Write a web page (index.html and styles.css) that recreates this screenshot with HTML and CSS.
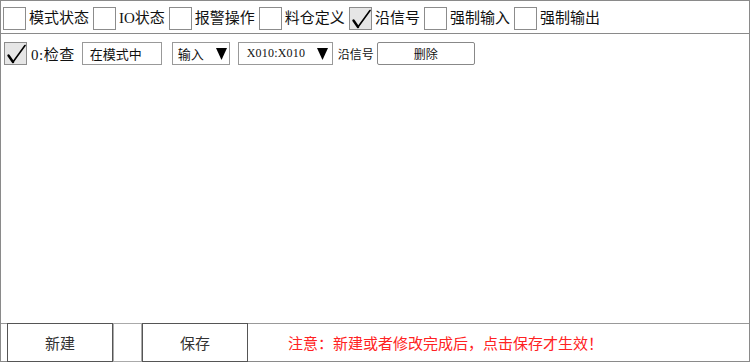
FILE: index.html
```html
<!DOCTYPE html>
<html lang="zh">
<head>
<meta charset="utf-8">
<link rel="stylesheet" href="styles.css">
</head>
<body>
<div class="frame">
  <div class="tabs">
    <div class="opt"><span class="box"></span><span class="lbl">模式状态</span></div>
    <div class="opt"><span class="box"></span><span class="lbl">IO状态</span></div>
    <div class="opt"><span class="box"></span><span class="lbl">报警操作</span></div>
    <div class="opt"><span class="box"></span><span class="lbl">料仓定义</span></div>
    <div class="opt"><span class="box on"><svg class="chk" viewBox="0 0 21 21"><path d="M3.5 12.5 L8 19" class="c1"/><path d="M8 19 L20 2.5" class="c2"/></svg></span><span class="lbl">沿信号</span></div>
    <div class="opt"><span class="box"></span><span class="lbl">强制输入</span></div>
    <div class="opt"><span class="box"></span><span class="lbl">强制输出</span></div>
  </div>
  <div class="content">
    <div class="row">
      <span class="box on"><svg class="chk" viewBox="0 0 21 21"><path d="M3.5 12.5 L8 19" class="c1"/><path d="M8 19 L20 2.5" class="c2"/></svg></span>
      <span class="idx">0:检查</span>
      <div class="field mode">在模式中</div>
      <div class="field sel s1"><span>输入</span><svg class="tri" viewBox="0 0 11 12"><polygon points="0,0 11,0 5.5,12"/></svg></div>
      <div class="field sel s2"><span>X010:X010</span><svg class="tri" viewBox="0 0 11 12"><polygon points="0,0 11,0 5.5,12"/></svg></div>
      <span class="small">沿信号</span>
      <div class="del">删除</div>
    </div>
  </div>
  <div class="footer">
    <div class="fbtn">新建</div>
    <div class="spacer"></div>
    <div class="fbtn save">保存</div>
    <div class="note">注意：新建或者修改完成后，点击保存才生效！</div>
  </div>
</div>
</body>
</html>
```
FILE: styles.css
```css
* { box-sizing: border-box; }
body {
  margin: 0;
  font-family: "Liberation Serif", "Noto Sans CJK SC", serif;
  color: #111;
  background: #fff;
}
.frame {
  width: 750px;
  height: 362px;
  border: 1px solid #8a8a8a;
  display: flex;
  flex-direction: column;
}
.tabs {
  height: 33px;
  flex: none;
  border-bottom: 1px solid #8a8a8a;
  display: flex;
  align-items: center;
  padding: 2px 0 0 2px;
  font-size: 15px;
}
.opt {
  display: flex;
  align-items: center;
  gap: 3px;
  margin-right: 4px;
}
.lbl { white-space: nowrap; line-height: 1; }
.box {
  width: 23px;
  height: 23px;
  flex: none;
  border: 1px solid #8c8c8c;
  background: #fff;
  display: flex;
  align-items: center;
  justify-content: center;
}
.box.on { background: #e6e6e6; }
.chk { width: 21px; height: 21px; }
.chk path { fill: none; stroke: #000; stroke-linecap: round; }
.chk .c1 { stroke-width: 2.4; }
.chk .c2 { stroke-width: 1.6; }
.content {
  flex: 1;
  padding: 8px 0 0 3px;
}
.row {
  display: flex;
  align-items: center;
  height: 23px;
}
.idx { margin-left: 4px; font-size: 15px; white-space: nowrap; letter-spacing: 0.5px; }
.field {
  height: 23px;
  border: 1px solid #999;
  display: flex;
  align-items: center;
  white-space: nowrap;
}
.mode { margin-left: 7px; width: 80px; padding-left: 7px; font-size: 13px; }
.sel { justify-content: space-between; }
.s1 { margin-left: 10px; width: 58px; padding: 0 2px 0 5px; font-size: 13px; }
.s2 { margin-left: 8px; width: 95px; padding: 0 4px 0 8px; font-size: 12px; letter-spacing: 0.2px; }
.tri { width: 11px; height: 12px; fill: #000; }
.small { margin-left: 5px; font-size: 12px; white-space: nowrap; }
.del {
  margin-left: 3px;
  width: 98px;
  height: 23px;
  border: 1px solid #888;
  border-radius: 2px;
  display: flex;
  align-items: center;
  justify-content: center;
  font-size: 12px;
}
.footer {
  height: 38px;
  flex: none;
  border-top: 1px solid #999;
  display: flex;
  align-items: stretch;
  padding-left: 6px;
}
.fbtn {
  width: 106px;
  margin: -1px 0;
  border: 1px solid #555;
  display: flex;
  align-items: center;
  justify-content: center;
  font-size: 15px;
  color: #333;
}
.spacer {
  width: 29px;
  margin: -1px 0;
  border: 1px solid #aaa;
}
.note {
  margin-left: 40px;
  display: flex;
  align-items: center;
  color: #f22;
  font-size: 15px;
  white-space: nowrap;
}
```
